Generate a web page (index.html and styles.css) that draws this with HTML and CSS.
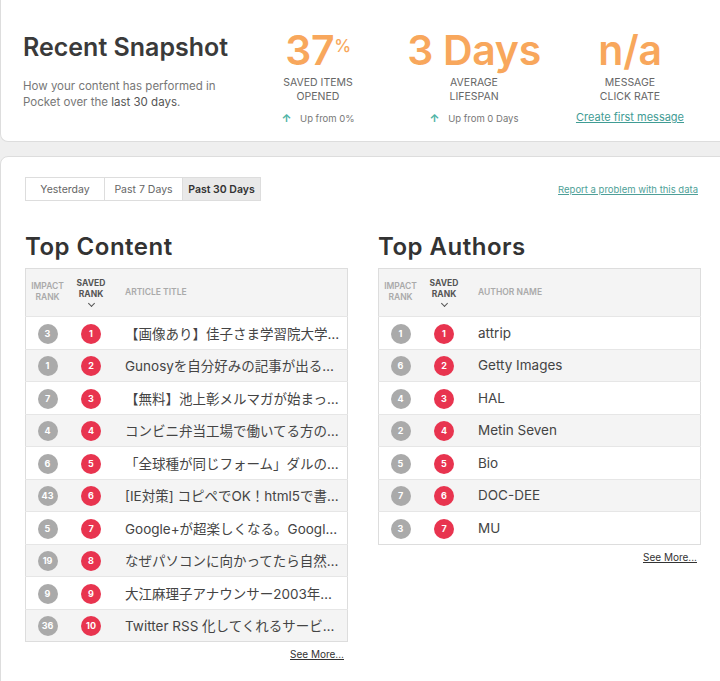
FILE: index.html
```html
<!doctype html>
<html lang="ja">
<head>
	<meta charset="UTF-8">
	<title>Pocket Analytics</title>
	<link rel="stylesheet" href="styles.css">
</head>
<body>
	<div class="snapshot">
	  <div class="snapshot__intro">
	    <h1 class="snapshot__title">Recent Snapshot</h1>
	    <p class="snapshot__desc">How your content has performed in Pocket over the <span class="snapshot__range">last 30 days</span>.</p>
	  </div>
	  <div class="snapshot__stats">
	    <div class="stat">
	      <div class="stat__value">37<sup>%</sup></div>
	      <div class="stat__label">Saved items<br>opened</div>
	      <div class="stat__note"><span class="stat__arrow">&#8593;</span> Up from 0%</div>
	    </div>
	    <div class="stat">
	      <div class="stat__value">3 Days</div>
	      <div class="stat__label">Average<br>lifespan</div>
	      <div class="stat__note"><span class="stat__arrow">&#8593;</span> Up from 0 Days</div>
	    </div>
	    <div class="stat">
	      <div class="stat__value">n/a</div>
	      <div class="stat__label">Message<br>click rate</div>
	      <a class="stat__link" href="#">Create first message</a>
	    </div>
	  </div>
	</div>

	<div class="report">
	  <div class="report__bar">
	    <div class="tabs">
	      <button class="tabs__item">Yesterday</button>
	      <button class="tabs__item">Past 7 Days</button>
	      <button class="tabs__item is-active">Past 30 Days</button>
	    </div>
	    <a class="report__problem" href="#">Report a problem with this data</a>
	  </div>

	  <div class="report__cols">
	    <div class="panel">
	      <h2 class="panel__title">Top Content</h2>
	      <table class="ranks">
	        <thead>
	          <tr>
	            <th class="ranks__impact">Impact<br>rank</th>
	            <th class="ranks__saved">Saved<br>rank<span class="ranks__chev"></span></th>
	            <th class="ranks__name">Article title</th>
	          </tr>
	        </thead>
	        <tbody>
	          <tr><td><span class="dot">3</span></td><td><span class="dot dot--red">1</span></td><td class="ranks__text">【画像あり】佳子さま学習院大学を中退、ICUへ</td></tr>
	          <tr><td><span class="dot">1</span></td><td><span class="dot dot--red">2</span></td><td class="ranks__text">Gunosyを自分好みの記事が出るようにする方法</td></tr>
	          <tr><td><span class="dot">7</span></td><td><span class="dot dot--red">3</span></td><td class="ranks__text">【無料】池上彰メルマガが始まったので登録</td></tr>
	          <tr><td><span class="dot">4</span></td><td><span class="dot dot--red">4</span></td><td class="ranks__text">コンビニ弁当工場で働いてる方の話がリアルすぎる</td></tr>
	          <tr><td><span class="dot">6</span></td><td><span class="dot dot--red">5</span></td><td class="ranks__text">「全球種が同じフォーム」ダルの“魔球”</td></tr>
	          <tr><td><span class="dot">43</span></td><td><span class="dot dot--red">6</span></td><td class="ranks__text">[IE対策] コピペでOK！html5で書かれたページ</td></tr>
	          <tr><td><span class="dot">5</span></td><td><span class="dot dot--red">7</span></td><td class="ranks__text">Google+が超楽しくなる。Google Chrome拡張</td></tr>
	          <tr><td><span class="dot">19</span></td><td><span class="dot dot--red">8</span></td><td class="ranks__text">なぜパソコンに向かってたら自然と姿勢が</td></tr>
	          <tr><td><span class="dot">9</span></td><td><span class="dot dot--red">9</span></td><td class="ranks__text">大江麻理子アナウンサー2003年の写真</td></tr>
	          <tr><td><span class="dot">36</span></td><td><span class="dot dot--red">10</span></td><td class="ranks__text">Twitter RSS 化してくれるサービスまとめ</td></tr>
	        </tbody>
	      </table>
	      <a class="panel__more" href="#">See More...</a>
	    </div>

	    <div class="panel">
	      <h2 class="panel__title">Top Authors</h2>
	      <table class="ranks">
	        <thead>
	          <tr>
	            <th class="ranks__impact">Impact<br>rank</th>
	            <th class="ranks__saved">Saved<br>rank<span class="ranks__chev"></span></th>
	            <th class="ranks__name">Author name</th>
	          </tr>
	        </thead>
	        <tbody>
	          <tr><td><span class="dot">1</span></td><td><span class="dot dot--red">1</span></td><td class="ranks__text">attrip</td></tr>
	          <tr><td><span class="dot">6</span></td><td><span class="dot dot--red">2</span></td><td class="ranks__text">Getty Images</td></tr>
	          <tr><td><span class="dot">4</span></td><td><span class="dot dot--red">3</span></td><td class="ranks__text">HAL</td></tr>
	          <tr><td><span class="dot">2</span></td><td><span class="dot dot--red">4</span></td><td class="ranks__text">Metin Seven</td></tr>
	          <tr><td><span class="dot">5</span></td><td><span class="dot dot--red">5</span></td><td class="ranks__text">Bio</td></tr>
	          <tr><td><span class="dot">7</span></td><td><span class="dot dot--red">6</span></td><td class="ranks__text">DOC-DEE</td></tr>
	          <tr><td><span class="dot">3</span></td><td><span class="dot dot--red">7</span></td><td class="ranks__text">MU</td></tr>
	        </tbody>
	      </table>
	      <a class="panel__more" href="#">See More...</a>
	    </div>
	  </div>
	</div>
</body>
</html>
```
FILE: styles.css
```css
body {
  background-color: #efefef;
  color: #333;
  font-family: "Inter", "Noto Sans CJK JP", sans-serif;
  margin: 0;
  overflow: hidden;
}

/* snapshot card */
.snapshot {
  background-color: #fff;
  border: 1px solid #ddd;
  border-top: 0;
  border-radius: 0 0 0 8px;
  box-sizing: border-box;
  display: flex;
  height: 142px;
  margin-right: -20px;
  padding: 32px 0 0 22px;
}

.snapshot__intro {
  width: 220px;
}

.snapshot__title {
  color: #3a3a3a;
  font-size: 25px;
  font-weight: 600;
  line-height: 30px;
  margin: 0;
  white-space: nowrap;
}

.snapshot__desc {
  color: #777;
  font-size: 11.5px;
  line-height: 16px;
  margin: 16px 0 0;
}

.snapshot__range {
  color: #555;
}

.snapshot__stats {
  display: grid;
  grid-template-columns: 150px 150px 150px;
  column-gap: 6px;
}

.stat {
  text-align: center;
}

.stat__value {
  color: #f8a75c;
  font-size: 41px;
  font-weight: 600;
  letter-spacing: -0.3px;
  line-height: 36px;
}

.stat__value sup {
  font-size: 17px;
  font-weight: 500;
  position: relative;
  top: -4px;
  vertical-align: top;
}

.stat__label {
  color: #666;
  font-size: 10.5px;
  line-height: 14px;
  margin-top: 8px;
  text-transform: uppercase;
}

.stat__note {
  color: #777;
  font-size: 9.5px;
  margin-top: 7px;
}

.stat__arrow {
  color: #4bb3a4;
  font-size: 11px;
  font-weight: 700;
  margin-right: 6px;
}

.stat__link {
  color: #3f9c94;
  display: inline-block;
  font-size: 11px;
  margin-top: 6px;
}

/* report card */
.report {
  background-color: #fff;
  border: 1px solid #ddd;
  border-radius: 8px 0 0 0;
  margin: 14px -20px 0 0;
  min-height: 600px;
  padding: 20px 0 0 24px;
}

.report__bar {
  align-items: center;
  display: flex;
  justify-content: space-between;
  width: 673px;
}

.tabs {
  border: 1px solid #ddd;
  display: flex;
}

.tabs__item {
  background-color: #fff;
  border: 0;
  border-left: 1px solid #ddd;
  color: #666;
  font-family: inherit;
  font-size: 10.5px;
  height: 22px;
  padding: 0;
  width: 78px;
}

.tabs__item:first-child {
  border-left: 0;
}

.tabs__item.is-active {
  background-color: #e9e9e9;
  color: #333;
  font-weight: 600;
}

.report__problem {
  color: #4e9f98;
  font-size: 9.5px;
}

.report__cols {
  display: flex;
  gap: 30px;
  margin-top: 32px;
}

.panel {
  display: flex;
  flex-direction: column;
  width: 323px;
}

.panel__title {
  color: #333;
  font-size: 24px;
  font-weight: 600;
  letter-spacing: 0.5px;
  line-height: 28px;
  margin: 0 0 7px;
}

.panel__more {
  align-self: flex-end;
  color: #333;
  font-size: 10px;
  margin: 6px 4px 0 0;
}

/* ranking tables */
.ranks {
  border: 1px solid #ddd;
  border-collapse: collapse;
  table-layout: fixed;
  width: 100%;
}

.ranks th {
  background-color: #f4f4f4;
  color: #aaa;
  font-size: 8.5px;
  font-weight: 600;
  height: 42px;
  line-height: 11px;
  padding: 2px 0 3px;
  text-transform: uppercase;
  vertical-align: middle;
}

.ranks__impact {
  width: 43px;
}

.ranks__saved {
  color: #555 !important;
  font-weight: 700 !important;
  width: 44px;
}

.ranks__chev {
  border-bottom: 1.5px solid #555;
  border-right: 1.5px solid #555;
  display: block;
  height: 4px;
  margin: 1px auto 0;
  transform: rotate(45deg);
  width: 4px;
}

.ranks th.ranks__name {
  padding-left: 12px;
  text-align: left;
}

.ranks td {
  border-top: 1px solid #e6e6e6;
  height: 31.5px;
  padding: 0;
  text-align: center;
}

.ranks tbody tr:nth-child(even) td {
  background-color: #f4f4f4;
}

.ranks td.ranks__text {
  color: #444;
  font-size: 13.5px;
  overflow: hidden;
  padding: 0 4px 0 12px;
  text-align: left;
  text-overflow: ellipsis;
  white-space: nowrap;
}

.dot {
  background-color: #aaa;
  border-radius: 50%;
  color: #fff;
  display: inline-block;
  font-size: 9px;
  font-weight: 700;
  height: 20px;
  line-height: 20px;
  text-align: center;
  vertical-align: middle;
  width: 20px;
}

.dot--red {
  background-color: #e8344f;
}
```
